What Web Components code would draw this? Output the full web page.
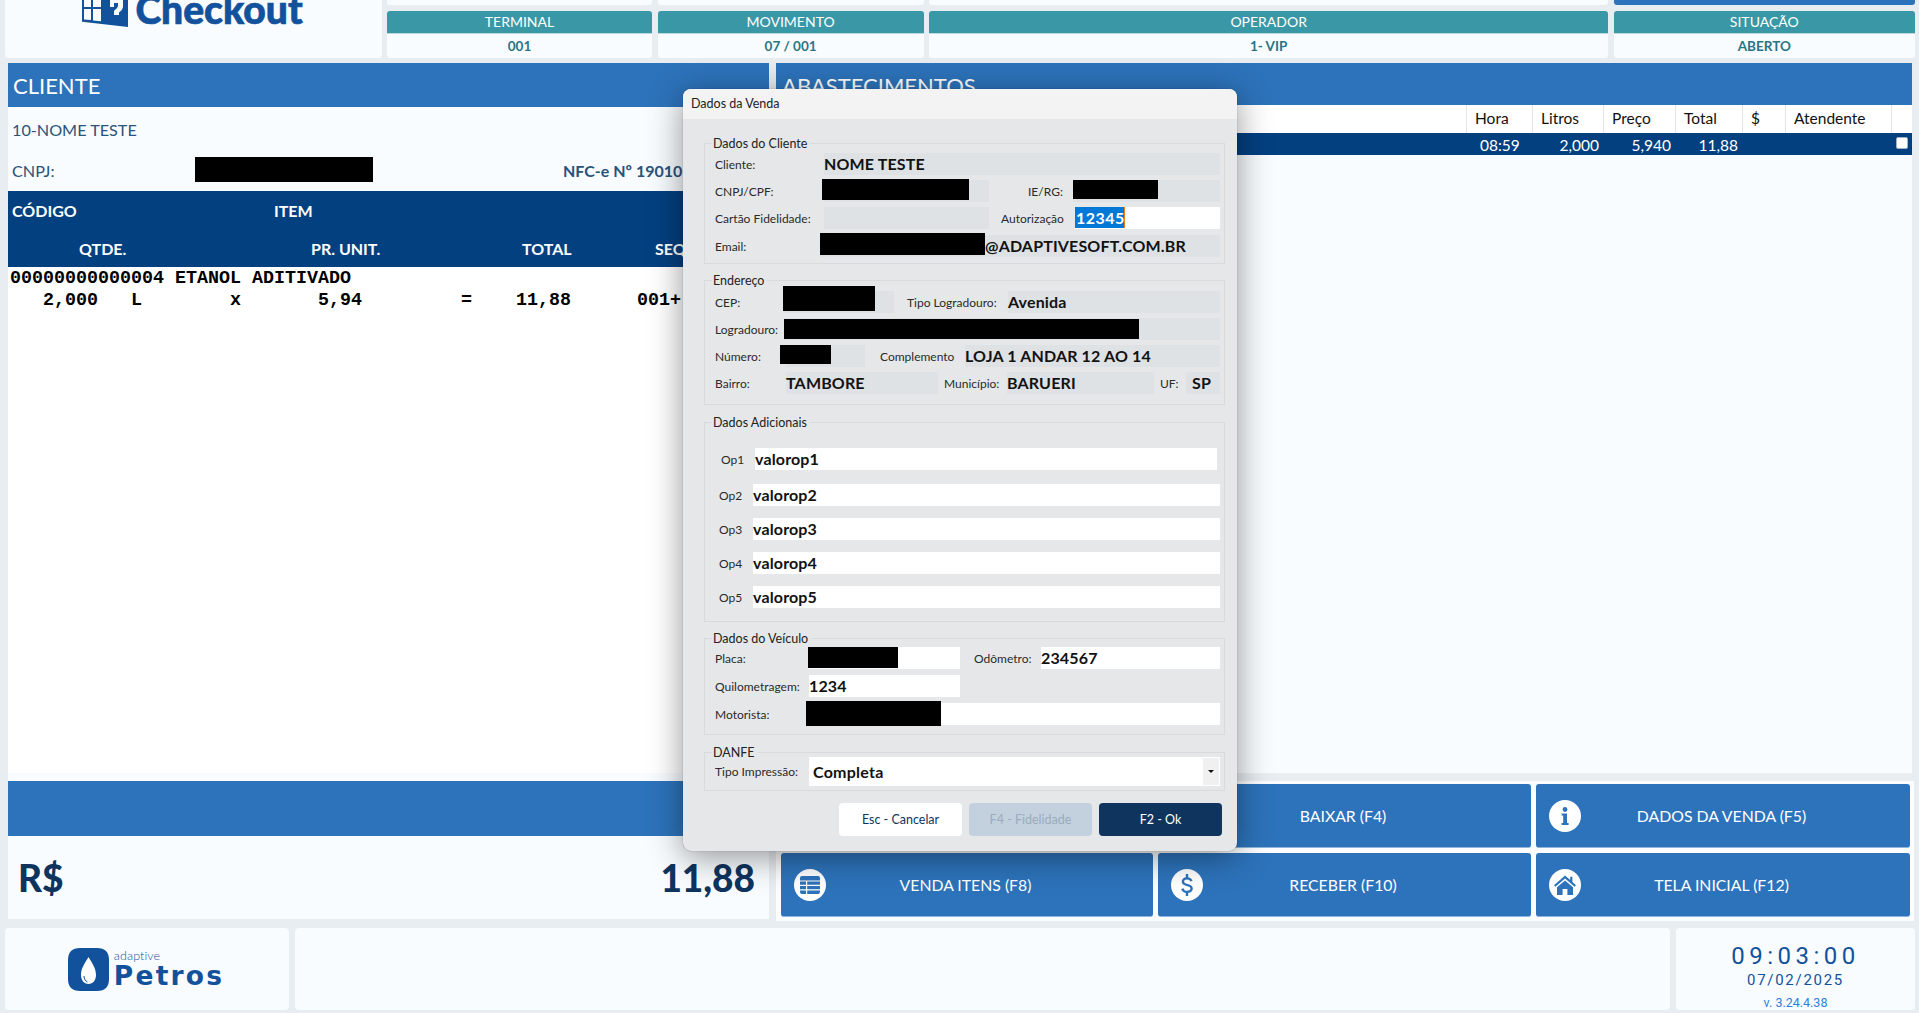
<!DOCTYPE html>
<html lang="pt-BR">
<head>
<meta charset="utf-8">
<title>Checkout</title>
<style>
  html,body{margin:0;height:100%;overflow:hidden;background:#e8edf1;font-family:Lato,"Open Sans",sans-serif;}
</style>
</head>
<body>
<pos-app></pos-app>

<script>
const LIGHT = '#f8fcff';

class PosCell extends HTMLElement{
  constructor(){
    super();
    this.attachShadow({mode:'open'});
    this.shadowRoot.innerHTML = `
      <style>
        :host{display:block;}
        .head{height:22px;background:#3a98a6;border-radius:3px 3px 0 0;color:#fff;font-size:14px;line-height:22px;text-align:center;border-bottom:1px solid #bcdade;box-sizing:content-box;}
        .val{height:24px;background:${LIGHT};border-radius:0 0 3px 3px;color:#2a7583;font-size:13.5px;font-weight:700;line-height:24px;text-align:center;}
      </style>
      <div class="head">${this.getAttribute('label')}</div>
      <div class="val">${this.getAttribute('value')}</div>`;
  }
}

class PosTop extends HTMLElement{
  constructor(){
    super();
    this.attachShadow({mode:'open'});
    this.shadowRoot.innerHTML = `
      <style>
        :host{display:grid;grid-template-columns:377px 1fr;gap:5px;padding:0 4px 0 5px;height:58px;}
        .logo{background:${LIGHT};border-radius:0 0 4px 4px;overflow:hidden;display:flex;justify-content:center;gap:7px;padding-right:2px;}
        .logo svg{display:block;flex:none;}
        .logo span{font-family:Lato,sans-serif;font-weight:900;font-size:39px;line-height:36px;height:27px;margin-top:-9px;color:#12519c;-webkit-text-stroke:.7px #12519c;}
        .cols{display:grid;grid-template-columns:265px 266px 679px 301px;gap:6px 5.6px;grid-template-rows:5px auto;}
        .strip{background:${LIGHT};border-radius:0 0 3px 3px;}
        .strip.blue{background:#2d73bb;}
        ::slotted(pos-cell){min-width:0;}
      </style>
      <div class="logo">
        <svg width="46" height="27" viewBox="0 0 46 27">
          <path d="M0 0H46V27L0 21.7Z" fill="#12519c"/>
          <path d="M2 0H9V7H2ZM11 0H19V7H11ZM2 9H9V20L2 19.4ZM11 9H19V21.2L11 20.4Z" fill="${LIGHT}"/>
          <path d="M28 0H41V6C41 10 38 11.5 37 12.5V15H32V11C33 9.5 36 8.5 36 5V3H32V7H28Z" fill="${LIGHT}"/>
        </svg>
        <span>Checkout</span>
      </div>
      <div class="cols">
        <div class="strip"></div><div class="strip"></div><div class="strip"></div><div class="strip blue"></div>
        <slot></slot>
      </div>`;
  }
}

class PosClient extends HTMLElement{
  constructor(){
    super();
    this.attachShadow({mode:'open'});
    this.shadowRoot.innerHTML = `
      <style>
        :host{display:flex;flex-direction:column;width:761px;height:856px;background:${LIGHT};}
        .band{height:44px;background:#2d73bb;color:#fff;font-size:22px;line-height:45px;padding-left:5px;flex:none;}
        .info{height:84px;flex:none;padding-left:4px;color:#2b5279;font-size:16.2px;position:relative;}
        .name{height:46px;line-height:46px;}
        .doc{display:flex;line-height:36px;}
        .doc span{width:551px;flex:none;}
        .doc b{font-weight:700;font-size:16px;white-space:nowrap;}
        .cut{position:absolute;background:#000;left:187px;top:50px;width:178px;height:25px;}
        .head{height:76px;flex:none;background:#034080;color:#fff;font-weight:700;font-size:16px;position:relative;}
        .r1,.r2{display:flex;height:38px;line-height:40px;white-space:nowrap;}
        .r1{padding-left:4px;}
        .r1 span:first-child{width:262px;}
        .r2{padding-left:71px;line-height:40px;}
        .r2 span:nth-child(1){width:232px;}
        .r2 span:nth-child(2){width:211px;}
        .r2 span:nth-child(3){width:133px;}
        .list{flex:none;height:506px;background:#fff;color:#000;font:700 18.33px/22px "Liberation Mono",monospace;padding:1px 0 0 2px;white-space:pre;box-sizing:border-box;}
        .gap{height:8px;flex:none;}
        .total-band{height:55px;background:#2d73bb;flex:none;}
        .total{flex:1;display:flex;justify-content:space-between;align-items:center;padding:0 14px 0 10px;color:#0e345e;font-weight:900;font-size:37px;}
      </style>
      <div class="band">CLIENTE</div>
      <div class="info">
        <div class="name">10-NOME TESTE</div>
        <div class="doc"><span>CNPJ:</span><b>NFC-e Nº 19010</b></div>
        <div class="cut"></div>
      </div>
      <div class="head">
        <div class="r1"><span>CÓDIGO</span><span>ITEM</span></div>
        <div class="r2"><span>QTDE.</span><span>PR. UNIT.</span><span>TOTAL</span><span>SEQ</span></div>
      </div>
      <div class="list">00000000000004 ETANOL ADITIVADO
   2,000   L        x       5,94         =    11,88      001+</div>
      <div class="gap"></div>
      <div class="total-band"></div>
      <div class="total"><span>R$</span><span>11,88</span></div>`;
  }
}

class PosSupply extends HTMLElement{
  constructor(){
    super();
    this.attachShadow({mode:'open'});
    this.shadowRoot.innerHTML = `
      <style>
        :host{display:block;flex:none;width:1136px;height:710px;background:${LIGHT};overflow:hidden;}
        .band{height:42px;background:#2d73bb;color:#fff;font-size:22px;line-height:45px;padding-left:6px;}
        .row{display:grid;grid-template-columns:690px 66px 71px 72px 67px 43px 106px 21px;}
        .row.h{height:28px;background:#fff;color:#111;font-size:15.5px;line-height:26px;}
        .row.h span{border-left:1px solid #e3e6e9;padding-left:8px;box-sizing:border-box;}
        .row.h span:first-child{border:0;}
        .row.d{height:22px;background:#034080;color:#fff;font-size:15.5px;line-height:24px;}
        .row.d span{text-align:right;padding-right:4px;}
        .row.d span:nth-child(2){text-align:left;padding:0 0 0 14px;}
        .box{width:12px;height:12px;background:#fff;border-radius:2px;margin:4px 0 0 5px;border:1px solid #9fb3c8;box-sizing:border-box;}
      </style>
      <div class="band">ABASTECIMENTOS</div>
      <div class="row h"><span></span><span>Hora</span><span>Litros</span><span>Preço</span><span>Total</span><span>$</span><span>Atendente</span><span></span></div>
      <div class="row d"><span></span><span>08:59</span><span>2,000</span><span>5,940</span><span>11,88</span><span></span><span></span><div class="box"></div></div>`;
  }
}

const ICONS = {
  info:`<circle cx="16" cy="9.5" r="2.4"/><path d="M12.6 13.5H18V23H19.6V25H12.6V23H14.2V15.5H12.6Z"/>`,
  table:`<path d="M8 7H24Q26 7 26 9V11.4H6V9Q6 7 8 7ZM6 12.6H12V15.8H6ZM13.2 12.6H26V15.8H13.2ZM6 17H12V20.2H6ZM13.2 17H26V20.2H13.2ZM6 21.4H12V25H8Q6 25 6 23ZM13.2 21.4H26V23Q26 25 24 25H13.2Z"/>`,
  dollar:`<path d="M14.8 5H17.2V8.2C19.4 8.5 21 9.8 21.6 11.8L19.3 12.6C18.9 11.2 17.8 10.4 16 10.4 14.2 10.4 13.1 11.2 13.1 12.5 13.1 13.9 14.5 14.4 16.5 14.9 19.2 15.6 21.8 16.6 21.8 19.7 21.8 22 20 23.6 17.2 23.9V27H14.8V23.9C12.4 23.5 10.7 22 10.2 20L12.5 19.2C13 20.8 14.2 21.8 16.1 21.8 18.1 21.8 19.4 20.9 19.4 19.6 19.4 18 17.8 17.5 15.7 17 13.1 16.3 10.7 15.4 10.7 12.6 10.7 10.3 12.4 8.6 14.8 8.2Z"/>`,
  home:`<path d="M16 6.5L21.2 11V7.8H23.4V13L27 16.3 25.6 17.8 16 9.4 6.4 17.8 5 16.3ZM16 11.4L24 18.3V26H18.4V20H13.6V26H8V18.3Z"/>`
};

class PosAction extends HTMLElement{
  constructor(){
    super();
    this.attachShadow({mode:'open'});
    const ic = this.getAttribute('icon');
    this.shadowRoot.innerHTML = `
      <style>
        :host{display:flex;position:relative;align-items:center;justify-content:center;background:#2d73bb;border-radius:3px;color:#fff;font-size:15.8px;border-bottom:1px solid #8fb5dc;box-sizing:border-box;padding-right:3px;}
        svg{position:absolute;left:13px;top:16px;}
      </style>
      ${ic ? `<svg width="32" height="32" viewBox="0 0 32 32"><circle cx="16" cy="16" r="16" fill="#fff"/><g fill="#2d73bb">${ICONS[ic]}</g></svg>` : ''}
      <slot></slot>`;
  }
}

class PosActions extends HTMLElement{
  constructor(){
    super();
    this.attachShadow({mode:'open'});
    this.shadowRoot.innerHTML = `
      <style>
        :host{display:grid;flex:none;width:1138px;height:140px;box-sizing:border-box;margin-top:8px;background:#fcfdfe;padding:3px 4px 4px 5px;grid-template-columns:372px 373px 374px;grid-template-rows:64px 64px;gap:5px;}
      </style>
      <slot></slot>`;
  }
}

class PosFooter extends HTMLElement{
  constructor(){
    super();
    this.attachShadow({mode:'open'});
    this.shadowRoot.innerHTML = `
      <style>
        :host{display:grid;grid-template-columns:284px 1375px 239px;gap:6px;margin:9px 0 0 5px;height:81px;}
        div.p{background:${LIGHT};border-radius:4px;}
        .brand{display:flex;align-items:center;justify-content:center;gap:5px;color:#12519c;padding-right:2px;}
        .brand svg{flex:none;}
        .words{display:flex;flex-direction:column;}
        .words i{font-style:normal;font-weight:300;font-size:12.5px;line-height:12px;height:12px;letter-spacing:.1px;}
        .words b{font-family:"DejaVu Sans",sans-serif;font-weight:700;font-size:26.5px;height:27px;line-height:27px;letter-spacing:2.2px;}
        .clock{display:flex;flex-direction:column;align-items:center;color:#12519c;font-family:Roboto,sans-serif;}
        .t{font-size:24px;letter-spacing:4.5px;line-height:26px;margin-top:15px;}
        .d{font-size:15px;letter-spacing:1.7px;line-height:20px;margin-top:1px;}
        .v{font-size:12.5px;color:#2f7fdd;line-height:14px;margin-top:6px;}
      </style>
      <div class="p brand">
        <svg width="41" height="43" viewBox="0 0 41 43">
          <path d="M12 0H29C37 0 41 4 41 12V31C41 39 37 43 29 43H12C4 43 0 39 0 31V12C0 4 4 0 12 0Z" fill="#12519c"/>
          <path d="M20.5 9C24 15 28 20 28 27C28 32 25 36 20.5 36C16 36 13 32 13 27C13 20 17 15 20.5 9Z" fill="#fff"/>
          <path d="M16 28C16 31 17.5 33 19.5 34" fill="none" stroke="#12519c" stroke-width="1"/>
        </svg>
        <div class="words"><i>adaptive</i><b>Petros</b></div>
      </div>
      <div class="p"></div>
      <div class="p clock">
        <div class="t">09:03:00</div>
        <div class="d">07/02/2025</div>
        <div class="v">v. 3.24.4.38</div>
      </div>`;
  }
}

// caixa de grupo do dialogo
class DlgGroup extends HTMLElement{
  constructor(){
    super();
    this.attachShadow({mode:'open'});
    this.shadowRoot.innerHTML = `
      <style>
        :host{display:block;position:relative;border:1px solid #d8dadc;margin-left:21px;width:521px;box-sizing:border-box;padding-right:4px;}
        .lg{position:absolute;left:7px;top:-8px;background:#e6e7e9;padding:0 3px 0 1px;font-size:12.5px;line-height:16px;color:#222;}
      </style>
      <div class="lg">${this.getAttribute('legend')}</div>
      <slot></slot>`;
  }
}

class DlgRow extends HTMLElement{
  constructor(){
    super();
    this.attachShadow({mode:'open'});
    this.shadowRoot.innerHTML = `
      <style>:host{display:flex;align-items:stretch;height:22px;padding-left:10px;}</style>
      <slot></slot>`;
  }
}

class DlgLabel extends HTMLElement{
  constructor(){
    super();
    this.attachShadow({mode:'open'});
    const w = this.getAttribute('w'), p = this.getAttribute('p') || 0;
    this.shadowRoot.innerHTML = `
      <style>:host{display:block;flex:none;width:${w}px;box-sizing:border-box;padding-left:${p}px;font-size:12px;line-height:24px;color:#2a2a2a;white-space:nowrap;}</style>
      <slot></slot>`;
  }
}

class DlgField extends HTMLElement{
  constructor(){
    super();
    this.attachShadow({mode:'open'});
    const w = this.getAttribute('w');
    const cut = this.getAttribute('cut');
    const c = cut ? cut.split(',') : null;
    const white = this.hasAttribute('white');
    this.shadowRoot.innerHTML = `
      <style>
        :host{display:block;position:relative;${w ? `flex:none;width:${w}px;` : 'flex:1;'}background:${white ? '#fff' : '#dfe2e5'};font-weight:700;font-size:16px;letter-spacing:.15px;line-height:22px;color:#121212;white-space:nowrap;padding-left:${this.getAttribute('p') || 0}px;box-sizing:border-box;}
        .cut{position:absolute;background:#000;}
      </style>
      <slot></slot>
      ${c ? `<div class="cut" style="left:${c[0]}px;top:${c[1]}px;width:${c[2]}px;height:${c[3]}px"></div>` : ''}`;
  }
}

class SaleDialog extends HTMLElement{
  constructor(){
    super();
    this.attachShadow({mode:'open'});
    this.shadowRoot.innerHTML = `
      <style>
        :host{display:block;position:absolute;left:683px;top:89px;width:554px;height:762px;background:#e6e7e9;border-radius:8px;box-shadow:0 6px 34px rgba(0,0,0,.42),0 0 1px rgba(0,0,0,.5);overflow:hidden;}
        .title{height:30px;background:#f3f3f3;font-size:12.5px;line-height:29px;padding-left:8px;color:#222;margin-bottom:24px;}
      </style>
      <div class="title">Dados da Venda</div>
      <slot></slot>`;
  }
}

class DlgButtons extends HTMLElement{
  constructor(){
    super();
    this.attachShadow({mode:'open'});
    this.shadowRoot.innerHTML = `
      <style>
        :host{display:flex;justify-content:flex-end;gap:7px;padding-right:15px;margin-top:12px;}
        div{width:123px;height:33px;border-radius:4px;font-size:12.5px;line-height:34px;text-align:center;}
        .a{background:#fff;color:#0f355f;}
        .b{background:#c3d1df;color:#9aabbd;}
        .c{background:#0f355f;color:#fff;}
      </style>
      <div class="a">Esc - Cancelar</div>
      <div class="b">F4 - Fidelidade</div>
      <div class="c">F2 - Ok</div>`;
  }
}

class DlgCombo extends HTMLElement{
  constructor(){
    super();
    this.attachShadow({mode:'open'});
    this.shadowRoot.innerHTML = `
      <style>
        :host{display:flex;flex:1;height:29px;background:#fff;font-weight:700;font-size:16px;letter-spacing:.25px;line-height:30px;color:#121212;padding-left:4px;}
        span{flex:1;}
        i{display:block;width:16px;height:27px;margin:1px 1px 0 0;background:#f0f0f0;position:relative;}
        i::after{content:"";position:absolute;left:5px;top:12px;border:3px solid transparent;border-top:3px solid #111;border-bottom:0;}
      </style>
      <span><slot></slot></span><i></i>`;
  }
}

class PosApp extends HTMLElement{
  constructor(){
    super();
    this.attachShadow({mode:'open'});
    this.shadowRoot.innerHTML = `
      <style>
        :host{display:block;position:relative;width:1919px;height:1013px;overflow:hidden;}
        .main{display:flex;gap:7px;margin:5px 0 0 8px;height:856px;}
        .right{display:flex;flex-direction:column;}
        .sel{background:#0078d7;color:#fff;border-right:1px solid #e8811a;padding:0 1px;display:inline-block;width:50px;box-sizing:border-box;letter-spacing:.5px;line-height:21px;height:21px;vertical-align:top;}
        .pad{padding-top:var(--t);padding-bottom:var(--b);}
        dlg-group{margin-bottom:16px;}
        dlg-group.m17{margin-bottom:17px;}
        dlg-row.g5{margin-top:5px;} dlg-row.g6{margin-top:6px;} dlg-row.g12{margin-top:12px;} dlg-row.g14{margin-top:14px;}
      </style>
      <pos-top>
        <pos-cell label="TERMINAL" value="001"></pos-cell>
        <pos-cell label="MOVIMENTO" value="07 / 001"></pos-cell>
        <pos-cell label="OPERADOR" value="1- VIP"></pos-cell>
        <pos-cell label="SITUAÇÃO" value="ABERTO"></pos-cell>
      </pos-top>
      <div class="main">
        <pos-client></pos-client>
        <div class="right">
          <pos-supply></pos-supply>
          <pos-actions>
            <pos-action></pos-action>
            <pos-action>BAIXAR (F4)</pos-action>
            <pos-action icon="info">DADOS DA VENDA (F5)</pos-action>
            <pos-action icon="table">VENDA ITENS (F8)</pos-action>
            <pos-action icon="dollar">RECEBER (F10)</pos-action>
            <pos-action icon="home">TELA INICIAL (F12)</pos-action>
          </pos-actions>
        </div>
      </div>
      <pos-footer></pos-footer>

      <sale-dialog>
        <dlg-group legend="Dados do Cliente" class="pad" style="--t:9px;--b:6px">
          <dlg-row><dlg-label w="109">Cliente:</dlg-label><dlg-field>NOME TESTE</dlg-field></dlg-row>
          <dlg-row class="g5"><dlg-label w="109">CNPJ/CPF:</dlg-label><dlg-field w="165" cut="-2,-1,147,21"></dlg-field><dlg-label w="84" p="39">IE/RG:</dlg-label><dlg-field cut="0,0,85,19"></dlg-field></dlg-row>
          <dlg-row class="g5"><dlg-label w="109">Cartão Fidelidade:</dlg-label><dlg-field w="165"></dlg-field><dlg-label w="86" p="12">Autorização</dlg-label><dlg-field white><span class="sel">12345</span></dlg-field></dlg-row>
          <dlg-row class="g6"><dlg-label w="105">Email:</dlg-label><dlg-field p="165" cut="0,-2,165,22">@ADAPTIVESOFT.COM.BR</dlg-field></dlg-row>
        </dlg-group>
        <dlg-group legend="Endereço" class="pad m17" style="--t:10px;--b:10px">
          <dlg-row><dlg-label w="68">CEP:</dlg-label><dlg-field w="111" cut="0,-5,92,25"></dlg-field><dlg-label w="114" p="13">Tipo Logradouro:</dlg-label><dlg-field>Avenida</dlg-field></dlg-row>
          <dlg-row class="g5"><dlg-label w="69">Logradouro:</dlg-label><dlg-field cut="0,1,355,20"></dlg-field></dlg-row>
          <dlg-row class="g5"><dlg-label w="71">Número:</dlg-label><dlg-field w="79" cut="-6,0,51,19"></dlg-field><dlg-label w="100" p="15">Complemento</dlg-label><dlg-field>LOJA 1 ANDAR 12 AO 14</dlg-field></dlg-row>
          <dlg-row class="g5"><dlg-label w="71">Bairro:</dlg-label><dlg-field w="152">TAMBORE</dlg-field><dlg-label w="69" p="6">Município:</dlg-label><dlg-field w="147">BARUERI</dlg-field><dlg-label w="32" p="6">UF:</dlg-label><dlg-field p="6">SP</dlg-field></dlg-row>
        </dlg-group>
        <dlg-group legend="Dados Adicionais" class="pad" style="--t:25px;--b:13px">
          <dlg-row><dlg-label w="40" p="6">Op1</dlg-label><dlg-field white style="margin-right:3px">valorop1</dlg-field></dlg-row>
          <dlg-row class="g14"><dlg-label w="38" p="4">Op2</dlg-label><dlg-field white>valorop2</dlg-field></dlg-row>
          <dlg-row class="g12"><dlg-label w="38" p="4">Op3</dlg-label><dlg-field white>valorop3</dlg-field></dlg-row>
          <dlg-row class="g12"><dlg-label w="38" p="4">Op4</dlg-label><dlg-field white>valorop4</dlg-field></dlg-row>
          <dlg-row class="g12"><dlg-label w="38" p="4">Op5</dlg-label><dlg-field white>valorop5</dlg-field></dlg-row>
        </dlg-group>
        <dlg-group legend="Dados do Veículo" class="pad m17" style="--t:8px;--b:9px">
          <dlg-row><dlg-label w="93">Placa:</dlg-label><dlg-field white w="152" cut="0,0,90,21"></dlg-field><dlg-label w="81" p="14">Odômetro:</dlg-label><dlg-field white>234567</dlg-field></dlg-row>
          <dlg-row class="g6"><dlg-label w="94">Quilometragem:</dlg-label><dlg-field white w="151">1234</dlg-field></dlg-row>
          <dlg-row class="g6"><dlg-label w="91">Motorista:</dlg-label><dlg-field white cut="0,-2,135,25"></dlg-field></dlg-row>
        </dlg-group>
        <dlg-group legend="DANFE" class="pad" style="--t:4px;--b:4px;margin-bottom:0">
          <dlg-row style="height:29px"><dlg-label w="94" style="line-height:30px">Tipo Impressão:</dlg-label><dlg-combo>Completa</dlg-combo></dlg-row>
        </dlg-group>
        <dlg-buttons></dlg-buttons>
      </sale-dialog>`;
  }
}

customElements.define('pos-cell',PosCell);
customElements.define('pos-top',PosTop);
customElements.define('pos-client',PosClient);
customElements.define('pos-supply',PosSupply);
customElements.define('pos-action',PosAction);
customElements.define('pos-actions',PosActions);
customElements.define('pos-footer',PosFooter);
customElements.define('dlg-group',DlgGroup);
customElements.define('dlg-row',DlgRow);
customElements.define('dlg-label',DlgLabel);
customElements.define('dlg-field',DlgField);
customElements.define('dlg-combo',DlgCombo);
customElements.define('dlg-buttons',DlgButtons);
customElements.define('sale-dialog',SaleDialog);
customElements.define('pos-app',PosApp);
</script>
</body>
</html>
